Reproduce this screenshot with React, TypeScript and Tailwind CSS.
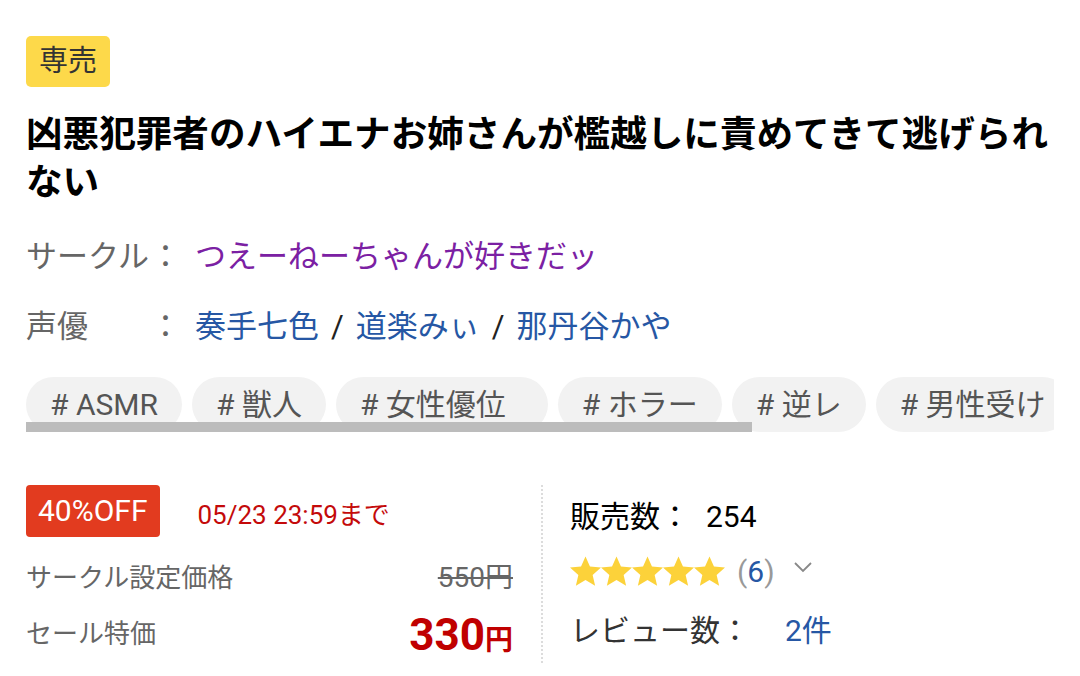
import React from 'react';

const tags: { label: string; extra?: boolean }[] = [
    { label: 'ASMR' },
    { label: '獣人' },
    { label: '女性優位', extra: true },
    { label: 'ホラー' },
    { label: '逆レ' },
    { label: '男性受け' },
];
const voiceActors = ['奏手七色', '道楽みぃ', '那丹谷かや'];

const font = 'font-["Roboto","Noto_Sans_CJK_JP",sans-serif]';

const Star: React.FC = () => (
    <svg width="31" height="30" viewBox="1.5 1.6 21 20.2" className="shrink-0">
        <path
            d="M12 1.8l3.02 6.9 7.48.68-5.66 4.96 1.68 7.34L12 17.8l-6.52 3.88 1.68-7.34L1.5 9.38l7.48-.68z"
            fill="#fcd23a"
        />
    </svg>
);

const Tag: React.FC<{ label: string; extra?: boolean }> = ({ label, extra }) => (
    <span
        className={`shrink-0 h-[55px] pl-6 ${extra ? 'pr-[42px]' : 'pr-6'} rounded-full bg-[#f2f2f2] text-[#555] text-[30px] leading-[55px] whitespace-nowrap`}
    >
        # {label}
    </span>
);

const App: React.FC = () => {
    return (
        <div className={`${font} bg-white w-[1080px] h-[676px] overflow-hidden px-[26px] pt-[36px]`}>
            <span className="inline-block h-[51px] px-[13px] rounded-[5px] bg-[#fdd94a] text-[#333] text-[29px] leading-[51px]">
                専売
            </span>

            <h1 className="mt-6 mr-[-20px] text-[36.6px] leading-[48px] font-bold text-black">
                凶悪犯罪者のハイエナお姉さんが檻越しに責めてきて逃げられない
            </h1>

            <div className="mt-7 flex items-center text-[31px] leading-[44px]">
                <span className="w-[124px] text-[#666]">サークル</span>
                <span className="w-[31px] text-[#666]">：</span>
                <a className="ml-[14px] text-[#7b20a3]">つえーねーちゃんが好きだッ</a>
            </div>

            <div className="mt-[26px] flex items-center text-[31px] leading-[44px]">
                <span className="w-[124px] text-[#666]">声優</span>
                <span className="w-[31px] text-[#666]">：</span>
                <span className="ml-[14px] flex items-center">
                    {voiceActors.map((name, i) => (
                        <React.Fragment key={name}>
                            {i > 0 && <span className="mx-[12px] text-[#222]">/</span>}
                            <a className="text-[#2657a4]">{name}</a>
                        </React.Fragment>
                    ))}
                </span>
            </div>

            <div className="relative mt-7 h-[55px] overflow-hidden">
                <div className="flex gap-[10px]">
                    {tags.map(t => <Tag key={t.label} label={t.label} extra={t.extra} />)}
                </div>
                {/* horizontal scrollbar thumb */}
                <div className="absolute left-0 bottom-0 w-[726px] h-[10px] bg-[#bcbcbc]" />
            </div>

            <div className="mt-[53px] flex">
                <div className="w-[487px]">
                    <div className="flex items-center">
                        <span className="h-[52px] px-3 rounded-[4px] bg-[#e23b1f] text-white text-[30px] leading-[52px]">
                            40%OFF
                        </span>
                        <span className="ml-[38px] mt-2 text-[#c40a0a] text-[26px]">05/23 23:59まで</span>
                    </div>
                    <div className="mt-[22px] flex items-center justify-between h-[38px]">
                        <span className="text-[26px] text-[#666]">サークル設定価格</span>
                        <span className="text-[28px] text-[#666] line-through">550円</span>
                    </div>
                    <div className="mt-[14px] flex items-end justify-between h-[46px]">
                        <span className="text-[26px] text-[#666] self-center">セール特価</span>
                        <span className="font-bold text-[#c00000] leading-none">
                            <span className="text-[44px]">330</span>
                            <span className="text-[28px]">円</span>
                        </span>
                    </div>
                </div>

                <div className="ml-[28px] w-0 h-[178px] border-l-2 border-dotted border-[#dcdcdc]" />

                <div className="ml-[27px] flex flex-col text-[30px]">
                    <div className="h-[62px] flex items-center text-black">
                        <span>販売数：</span>
                        <span className="ml-4">254</span>
                    </div>
                    <div className="h-[48px] flex items-center">
                        {Array.from({ length: 5 }).map((_, i) => <Star key={i} />)}
                        <span className="ml-[12px] text-[#999]">(</span>
                        <span className="text-[#2657a4]">6</span>
                        <span className="text-[#999]">)</span>
                        <svg width="20" height="12" viewBox="0 0 20 12" className="ml-[18px] -mt-2">
                            <path d="M2 2l8 8 8-8" fill="none" stroke="#888" strokeWidth="1.8" />
                        </svg>
                    </div>
                    <div className="mt-[13px] h-[44px] flex items-center">
                        <span className="text-[#333]">レビュー数：</span>
                        <span className="ml-[35px] text-[#2657a4]">2件</span>
                    </div>
                </div>
            </div>
        </div>
    );
};

export default App;
